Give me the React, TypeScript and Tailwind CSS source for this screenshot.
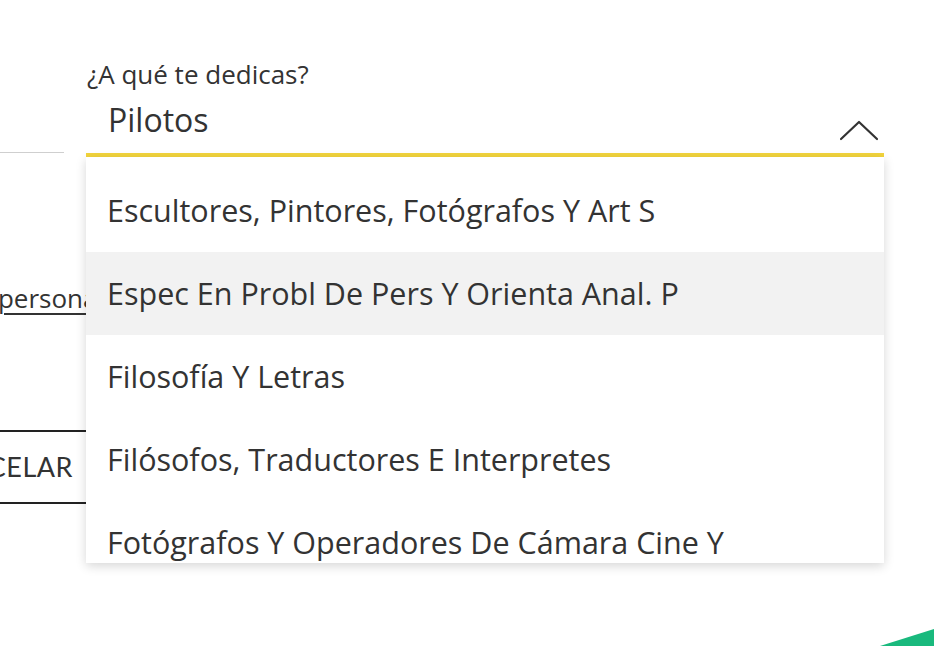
import React from "react";

const items = [
  "Escultores, Pintores, Fotógrafos Y Art S",
  "Espec En Probl De Pers Y Orienta Anal. P",
  "Filosofía Y Letras",
  "Filósofos, Traductores E Interpretes",
  "Fotógrafos Y Operadores De Cámara Cine Y",
];

export default function App() {
  return (
    <div
      className="relative w-[934px] h-[646px] overflow-hidden bg-white text-[#333]"
      style={{ fontFamily: '"Open Sans", "Noto Sans", sans-serif' }}
    >
      <div className="flex flex-row">
        {/* left column (mostly off screen) */}
        <div className="flex flex-col w-[240px] shrink-0 -ml-[176px] mr-[22px]">
          <div className="h-[153px] border-b border-[#cfcfcf]" />
          <div className="mt-[128px] flex justify-end">
            <span className="text-[26px] leading-[34px] underline underline-offset-[5px] decoration-[1.5px] whitespace-nowrap -mr-[67px]">
              datos personales
            </span>
          </div>
          <div className="mt-[115px] h-[74px] w-[276px] border-2 border-[#222] flex items-center justify-end pr-[25px]">
            <span
              className="text-[27px] tracking-[0.5px] whitespace-nowrap"
              style={{ fontFamily: 'Lato, "Open Sans", sans-serif' }}
            >
              CANCELAR
            </span>
          </div>
        </div>

        {/* select field */}
        <div className="relative w-[798px] shrink-0 flex flex-col pt-[56px]">
          <div className="border-b-4 border-[#f2d43c]">
            <div className="text-[26px] leading-[36px] pl-[1px]">¿A qué te dedicas?</div>
            <div className="flex items-center justify-between pl-[22px] pr-[5px] h-[61px] pb-[6px]">
              <span className="text-[32px] leading-[40px]">Pilotos</span>
              <svg width="40" height="22" viewBox="0 0 40 22" fill="none" className="mt-[22px]">
                <polyline
                  points="2,19 20,2 38,19"
                  stroke="#333"
                  strokeWidth="2.2"
                  strokeLinecap="round"
                  strokeLinejoin="round"
                />
              </svg>
            </div>
          </div>

          {/* dropdown menu */}
          <div className="absolute left-0 right-0 top-[157px] h-[406px] overflow-hidden bg-white pt-[12px] shadow-[0_3px_10px_rgba(0,0,0,0.16)]">
            {items.map((t, i) => (
              <div
                key={t}
                className={`h-[83px] flex items-center pl-[21px] text-[30.5px] whitespace-nowrap ${
                  i === 1 ? "bg-[#f2f2f2]" : "bg-white"
                }`}
              >
                {t}
              </div>
            ))}
          </div>
        </div>
      </div>

      <svg
        className="absolute right-0 bottom-0"
        width="54"
        height="17"
        viewBox="0 0 54 17"
      >
        <polygon points="0,17 54,0 54,17" fill="#19b97d" />
      </svg>
    </div>
  );
}
